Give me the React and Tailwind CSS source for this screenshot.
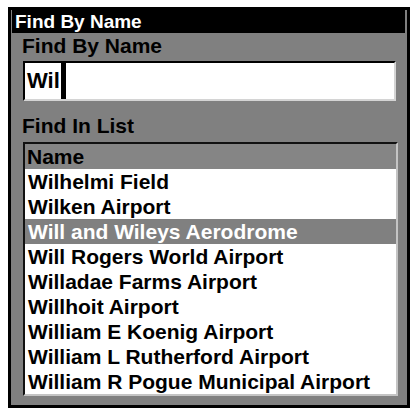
import React from "react";

const ROWS = [
  "Wilhelmi Field",
  "Wilken Airport",
  "Will and Wileys Aerodrome",
  "Will Rogers World Airport",
  "Willadae Farms Airport",
  "Willhoit Airport",
  "William E Koenig Airport",
  "William L Rutherford Airport",
  "William R Pogue Municipal Airport",
];

const SELECTED = 2;

export default function App() {
  return (
    <div
      className="w-[412px] h-[412px] bg-white pt-[7px] pl-[8px]"
      style={{ fontFamily: '"Liberation Sans", Arial, sans-serif' }}
    >
      <div className="w-[402px] h-[401px] border-[3px] border-black bg-[#808080] flex flex-col font-bold">
        {/* title bar */}
        <div className="ml-px mr-[2px] h-[23px] bg-black flex items-center pl-[3px] text-white text-[19px] leading-[23px]">
          Find By Name
        </div>

        <div className="mt-px pl-[11px] text-[21px] leading-[24px] text-black">Find By Name</div>

        {/* input */}
        <div className="mt-[3px] ml-[12px] w-[373px] h-[40px] bg-white border-2 border-t-black border-l-black border-r-[#d4d4d4] border-b-[#d4d4d4] flex items-center pl-[2px]">
          <span className="text-[22px] leading-[26px] text-black">Wil</span>
          <span className="ml-px w-[5px] h-[36px] bg-black" />
        </div>

        <div className="mt-[13px] pl-[11px] text-[21px] leading-[24px] text-black">Find In List</div>

        {/* list */}
        <div className="mt-[4px] ml-[12px] w-[375px] h-[254px] bg-white border-2 border-t-[#111] border-l-[#111] border-r-[#c4c4c4] border-b-[#c4c4c4] flex flex-col">
          <div className="h-[25px] bg-[#858585] pl-[2px] text-[21px] leading-[25px] text-black">Name</div>
          {ROWS.map((r, i) => (
            <div
              key={r}
              className={
                i === SELECTED
                  ? "h-[25px] bg-[#808080] pl-[3px] text-[21px] leading-[25px] text-white whitespace-nowrap"
                  : "h-[25px] pl-[3px] text-[21px] leading-[25px] text-black whitespace-nowrap"
              }
            >
              {r}
            </div>
          ))}
        </div>
      </div>
    </div>
  );
}
